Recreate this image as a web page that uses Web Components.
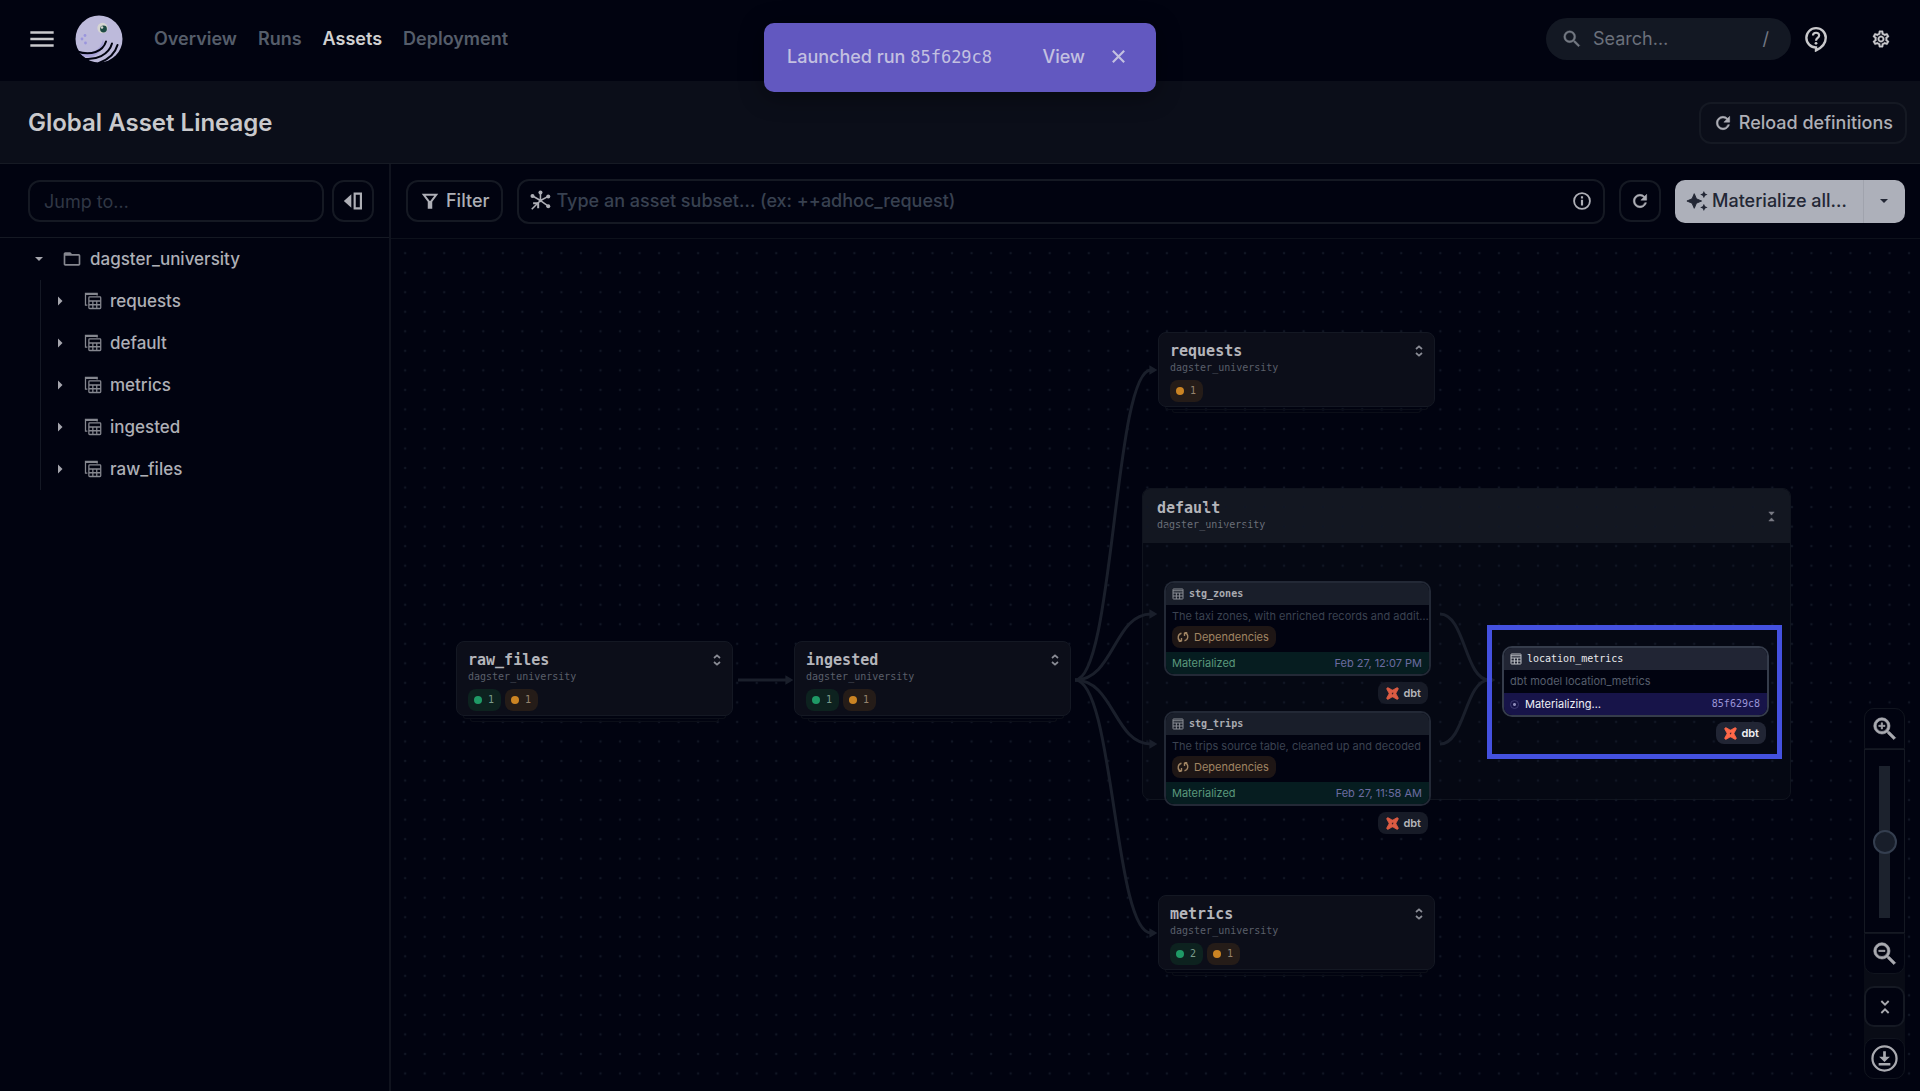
<!DOCTYPE html>
<html lang="en">
<head>
<meta charset="utf-8">
<meta name="viewport" content="width=device-width, initial-scale=1">
<title>Global Asset Lineage</title>
<style>
  :root {
    --bg: #010310;
    --panel: #0b0e19;
    --line: #151923;
    --text: #aeafb6;
    --bright: #c9c9cc;
    --mono: "DejaVu Sans Mono", "Liberation Mono", monospace;
  }
  html, body { height: 100%; }
  body {
    margin: 0;
    background: var(--bg);
    color: var(--text);
    font: 17px/20px Inter, "Liberation Sans", sans-serif;
    font-optical-sizing: none;
  }
</style>
</head>
<body>
<lineage-app></lineage-app>

<script>
const BASE = `
  *, *::before, *::after { box-sizing: border-box; }
  button, input { font: inherit; font-optical-sizing: inherit; color: inherit; margin: 0; }
  button { cursor: pointer; }
  a { color: inherit; text-decoration: none; }
`;

function define(name, css, html) {
  customElements.define(name, class extends HTMLElement {
    constructor() {
      super();
      const markup = typeof html === 'function' ? html(this) : html;
      this.attachShadow({ mode: 'open' }).innerHTML = `<style>${BASE}${css}</style>${markup}`;
    }
  });
}

const LENS = 'M15.5 14h-.79l-.28-.27A6.47 6.47 0 0 0 16 9.5 6.5 6.5 0 1 0 9.5 16c1.61 0 3.09-.59 4.23-1.57l.27.28v.79l5 4.99L20.49 19zm-6 0C7.01 14 5 11.99 5 9.5S7.01 5 9.5 5 14 7.01 14 9.5 11.99 14 9.5 14z';

const ICONS = {
  menu: '<path d="M2 6.4h20M2 12h20M2 17.6h20" fill="none" stroke="currentColor" stroke-width="2.2"/>',
  search: `<path d="${LENS}" stroke="currentColor" stroke-width=".4"/>`,
  zoomin: `<path d="${LENS}M12 10h-2v2H9v-2H7V9h2V7h1v2h2z" stroke="currentColor" stroke-width=".5"/>`,
  zoomout: `<path d="${LENS}M7 9h5v1H7z" stroke="currentColor" stroke-width=".5"/>`,
  refresh: '<path d="M17.65 6.35A7.958 7.958 0 0 0 12 4c-4.42 0-7.99 3.58-7.99 8s3.57 8 7.99 8c3.73 0 6.84-2.55 7.73-6h-2.08A5.99 5.99 0 0 1 12 18c-3.31 0-6-2.69-6-6s2.69-6 6-6c1.66 0 3.14.69 4.22 1.78L13 11h7V4z" stroke="currentColor" stroke-width=".6"/>',
  gear: '<path d="M19.43 12.98c.04-.32.07-.64.07-.98 0-.34-.03-.66-.07-.98l2.11-1.65c.19-.15.24-.42.12-.64l-2-3.46a.5.5 0 0 0-.61-.22l-2.49 1c-.52-.4-1.08-.73-1.69-.98l-.38-2.65A.488.488 0 0 0 14 2h-4c-.25 0-.46.18-.49.42l-.38 2.65c-.61.25-1.17.59-1.69.98l-2.49-1a.566.566 0 0 0-.18-.03c-.17 0-.34.09-.43.25l-2 3.46c-.13.22-.07.49.12.64l2.11 1.65c-.04.32-.07.65-.07.98 0 .33.03.66.07.98l-2.11 1.65c-.19.15-.24.42-.12.64l2 3.46a.5.5 0 0 0 .61.22l2.49-1c.52.4 1.08.73 1.69.98l.38 2.65c.03.24.24.42.49.42h4c.25 0 .46-.18.49-.42l.38-2.65c.61-.25 1.17-.59 1.69-.98l2.49 1c.06.02.12.03.18.03.17 0 .34-.09.43-.25l2-3.46c.12-.22.07-.49-.12-.64zm-1.98-1.71c.04.31.05.52.05.73 0 .21-.02.43-.05.73l-.14 1.13.89.7 1.08.84-.7 1.21-1.27-.51-1.04-.42-.9.68c-.43.32-.84.56-1.25.73l-1.06.43-.16 1.13-.2 1.35h-1.4l-.19-1.35-.16-1.13-1.06-.43c-.43-.18-.83-.41-1.23-.71l-.91-.7-1.06.43-1.27.51-.7-1.21 1.08-.84.89-.7-.14-1.13c-.03-.31-.05-.54-.05-.74s.02-.43.05-.73l.14-1.13-.89-.7-1.08-.84.7-1.21 1.27.51 1.04.42.9-.68c.43-.32.84-.56 1.25-.73l1.06-.43.16-1.13.2-1.35h1.39l.19 1.35.16 1.13 1.06.43c.43.18.83.41 1.23.71l.91.7 1.06-.43 1.27-.51.7 1.21-1.07.85-.89.7zM12 8c-2.21 0-4 1.79-4 4s1.79 4 4 4 4-1.79 4-4-1.79-4-4-4zm0 6c-1.1 0-2-.9-2-2s.9-2 2-2 2 .9 2 2-.9 2-2 2z" stroke="currentColor" stroke-width=".4"/>',
  help: '<path d="M12 2a8.9 8.9 0 1 0 0 17.8V22.500C16.800 20.300 21 16 21 10.900A8.900 8.900 0 0 0 12 2z" fill="none" stroke="currentColor" stroke-width="2.200"/><path d="M9.200 8.800c0-3.400 5.700-3.500 5.700 0 0 2.200-2.900 2.300-2.900 4.800" fill="none" stroke="currentColor" stroke-width="2"/><circle cx="12" cy="16" r="1.300"/>',
  info: '<circle cx="12" cy="12" r="9.500" fill="none" stroke="currentColor" stroke-width="2.200"/><path d="M10.700 10.500h2.600V17.500h-2.600zM10.700 6.300h2.600v2.600h-2.600z"/>',
  close: '<path d="M4 4l16 16M20 4L4 20" fill="none" stroke="currentColor" stroke-width="3"/>',
  down: '<path d="M4 8h16l-8 8z"/>',
  right: '<path d="M8 3l9 9-9 9z"/>',
  folder: '<path d="M20 6h-8l-2-2H4c-1.100 0-2 .9-2 2v12c0 1.100.9 2 2 2h16c1.100 0 2-.9 2-2V8c0-1.100-.9-2-2-2zm0 12H4V8h16z"/>',
  filter: '<path d="M4.500 4.500h15L13.500 12.500V20h-3v-7.500z" fill="none" stroke="currentColor" stroke-width="2.400"/><path d="M10 12h4v8h-4z"/>',
  panel: '<path d="M10 4v16L1 12z"/><path d="M14 3.200h7.500v17.600H14z" fill="none" stroke="currentColor" stroke-width="2.600"/>',
  graph: '<g fill="none" stroke="currentColor" stroke-width="1.700"><path d="M12.500 11.500V3.500M12.500 11.500L21 7M12.500 11.500L4 6.500M12.500 11.500l8.500 6M12.500 11.500L3 21"/><path d="M4.500 14.500h5.500v5.500" stroke-width="2.200"/></g><circle cx="12.500" cy="2.800" r="2.200"/><circle cx="21" cy="7" r="2.200"/><circle cx="3.800" cy="6.500" r="2.200"/><circle cx="21" cy="17.800" r="2.200"/><circle cx="12.500" cy="11.500" r="1.800"/>',
  sparkle: '<path d="M9 4l2.400 5.600L17 12l-5.600 2.400L9 20l-2.400-5.600L1 12l5.600-2.400z" stroke="currentColor"/><path d="M19.500 1l1.300 2.700 2.700 1.300-2.700 1.300-1.300 2.700-1.300-2.700L15.500 5l2.700-1.300zM19.500 15l1.300 2.700 2.700 1.300-2.700 1.300-1.300 2.700-1.300-2.700-2.700-1.300 2.700-1.300z"/>',
  table: '<g fill="none" stroke="currentColor" stroke-width="2"><rect x="2" y="2" width="20" height="20" rx="1"/><path d="M2 5.500h20M2 10h20M2 16h20M8.700 10v12M15.300 10v12"/></g>',
  tables: '<g fill="none" stroke="currentColor" stroke-width="1.700"><path d="M4.500 17.500H2V2h15.500v2.500"/><rect x="6.500" y="6.500" width="15.800" height="15.500" rx="1"/><path d="M6.500 12h15.800M6.500 17h15.800M11.800 12v10M17 12v10"/></g><path d="M2 2h16v2H2z"/>',
  expand: '<path d="M7.500 9l4.500-4 4.500 4M7.500 15l4.500 4 4.500-4" fill="none" stroke="currentColor" stroke-width="2.600"/>',
  collapse: '<path d="M6.500 3l5.500 5.500L17.500 3M6.500 21l5.500-5.500 5.500 5.500" fill="none" stroke="currentColor" stroke-width="2.800"/>',
  squeeze: '<path d="M6 2l6 7 6-7zM6 22l6-7 6 7z" stroke="currentColor"/>',
  download: '<circle cx="12" cy="12" r="10.700" fill="none" stroke="currentColor" stroke-width="2"/><path d="M10.800 5.500h2.400v5h3.600L12 15 7.200 10.500h3.600zM6.800 16h10.400v2.200H6.800z"/>',
  deps: '<g fill="none" stroke="currentColor" stroke-width="2.800"><path d="M9 20.500V14M9 20.500C4.500 20 2 16 2.500 11.500 3 8 5 5.500 9 4.500M3.500 20.500H9M15 3.500V10M15 3.500c4.500.500 7 4.500 6.500 9-.5 3.500-2.500 6-6.500 7M20.500 3.500H15"/></g>',
  dbt: '<path d="M1.600 4.200C.8 2.300 2.400.8 4.200 1.600L11 5.400c.7.300 1.400.3 2 0l6.800-3.800c1.900-.9 3.500.8 2.600 2.600L18.600 11c-.3.700-.3 1.400 0 2l3.800 6.800c.9 1.900-.8 3.500-2.600 2.600L13 18.600c-.7-.3-1.400-.3-2 0l-6.800 3.800c-1.900.9-3.500-.8-2.600-2.600L5.400 13c.3-.7.3-1.400 0-2z" fill="#ff6849" stroke="#ff6849" stroke-width="1.500"/><path d="M11.500 10.500l2-.5v2l-1.500 2-1.500-1z" fill="#41202a"/>'
};

define('ui-icon',
  `:host { display: inline-flex; flex: none; width: var(--size, 18px); height: var(--size, 18px); }
   svg { width: 100%; height: 100%; fill: currentColor; display: block; }`,
  el => `<svg viewBox="0 0 24 24" aria-hidden="true">${ICONS[el.getAttribute('name')]}</svg>`);

define('brand-logo',
  `:host { display: block; width: 48px; height: 48px; } svg { display: block; }`,
  `<svg width="48" height="48" viewBox="0 0 48 48" aria-hidden="true">
     <circle cx="24" cy="24" r="23.500" fill="#bdbadb"/>
     <path d="M3 36c12 4 23 0 25-12 2 6-2 14-9 17S6 41 3 36z" fill="#9f98d8" opacity=".7"/>
     <g fill="none" stroke="#010310" stroke-width="2" stroke-linecap="round">
       <path d="M2 36.500c14 4.500 26 0 29-10"/>
       <path d="M7 43.500c14 2.500 27-4 30-15"/>
       <path d="M24 48c9-3.500 16-9 18.500-18"/>
     </g>
     <circle cx="27.500" cy="13" r="5.200" fill="#d6d6d2"/>
     <circle cx="28.500" cy="14" r="3.400" fill="#1d4a44"/><circle cx="27" cy="12.500" r="1.300" fill="#d6d6d2"/>
     <g fill="#9a95dd"><circle cx="10" cy="20.500" r="1.400"/><circle cx="7" cy="24" r="1.400"/><circle cx="10.500" cy="28" r="1.400"/></g>
   </svg>`);

define('top-bar',
  `:host { display: flex; align-items: center; height: 81px; padding: 0 21px 3px 28px; font-size: 18px; }
   .menu, .tool { background: none; border: 0; padding: 0; display: flex; color: var(--bright); }
   .menu { --size: 28px; }
   brand-logo { margin: 0 31px 0 19px; }
   nav { display: flex; gap: 21px; font-weight: 600; color: #555d6a; flex: 1; }
   nav a[aria-current] { color: #d0d0d0; }
   .search { display: flex; align-items: center; gap: 10px; width: 245px; height: 42px; padding: 0 22px 0 15px; border-radius: 21px; background: #131823; color: #747983; --size: 22px; }
   input { flex: 1; min-width: 0; padding: 0; border: 0; background: none; outline: 0; }
   input::placeholder { color: #6b707b; opacity: 1; }
   .help { --size: 26px; margin: 0 42px 0 12px; }
   .gear { --size: 20px; margin-right: 8px; }`,
  `<button class="menu" aria-label="Menu"><ui-icon name="menu"></ui-icon></button>
   <brand-logo></brand-logo>
   <nav><a href="#">Overview</a><a href="#">Runs</a><a href="#" aria-current="page">Assets</a><a href="#">Deployment</a></nav>
   <label class="search"><ui-icon name="search"></ui-icon><input type="text" aria-label="Search" placeholder="Search…"><span>/</span></label>
   <button class="tool help" aria-label="Help"><ui-icon name="help"></ui-icon></button>
   <button class="tool gear" aria-label="Settings"><ui-icon name="gear"></ui-icon></button>`);

define('ui-button',
  `:host { display: block; flex: none; }
   button { display: flex; align-items: center; justify-content: center; gap: 6px; height: 42px; min-width: 42px; padding: 0 var(--pad, 0px); background: none; border: 2px solid var(--line); border-radius: 12px; color: var(--text); font-weight: 500; white-space: nowrap; }`,
  el => `<button aria-label="${el.getAttribute('label') || el.textContent.trim()}"><slot></slot></button>`);

define('title-bar',
  `:host { display: flex; align-items: center; justify-content: space-between; height: 83px; padding: 2px 13px 0 28px; background: var(--panel); border-bottom: 1px solid #161a24; font-size: 18px; }
   h1 { margin: 0; font-size: 24px; line-height: 28px; font-weight: 600; color: var(--bright); }
   ui-button { --pad: 12px; --size: 20px; }`,
  `<h1><slot></slot></h1>
   <ui-button><ui-icon name="refresh"></ui-icon>Reload definitions</ui-button>`);

define('run-toast',
  `:host { position: absolute; top: 23px; left: 50%; transform: translateX(-50%); display: flex; align-items: center; width: 392px; height: 69px; padding: 0 29px 2px 23px; background: #6258c0; border-radius: 10px; color: #c3c0e0; box-shadow: 0 4px 24px #0006; font-size: 18px; font-weight: 500; }
   p { margin: 0; flex: 1; }
   code { font: 17px/20px var(--mono); }
   button { background: none; border: 0; padding: 0; display: flex; color: inherit; --size: 17px; margin-left: 25px; }`,
  `<p>Launched run <code><slot></slot></code></p><a href="#">View</a>
   <button aria-label="Dismiss"><ui-icon name="close"></ui-icon></button>`);

define('tree-row',
  `:host { display: flex; align-items: center; height: 42px; color: var(--text); font-weight: 500; }
   .caret { --size: 12px; display: flex; width: 14px; background: none; border: 0; padding: 0; color: #a5a6ad; }
   .kind { --size: 20px; color: #85878f; margin: 0 8px 0 15px; }
   :host([group]) .kind { --size: 18px; margin: 0 8px 0 16px; }`,
  el => `<button class="caret" aria-label="Toggle"><ui-icon name="${el.hasAttribute('group') ? 'right' : 'down'}"></ui-icon></button>
   <ui-icon class="kind" name="${el.hasAttribute('group') ? 'tables' : 'folder'}"></ui-icon><a href="#"><slot></slot></a>`);

define('asset-sidebar',
  `:host { display: block; flex: 0 0 391px; min-width: 0; border-right: 2px solid #10131e; }
   .bar { display: flex; gap: 8px; padding: 16px 15px 15px 28px; border-bottom: 1px solid var(--line); --size: 20px; font-size: 18px; }
   input { flex: 1; min-width: 0; height: 42px; padding: 0 14px; background: none; border: 2px solid var(--line); border-radius: 12px; }
   input::placeholder { color: #303745; opacity: 1; }
   .tree { padding-left: 33px; }
   .kids { margin-left: 7px; padding-left: 13px; border-left: 1px solid #141824; }`,
  `<div class="bar"><input type="text" aria-label="Jump to" placeholder="Jump to…"><ui-button label="Hide sidebar"><ui-icon name="panel"></ui-icon></ui-button></div>
   <div class="tree"><tree-row>dagster_university</tree-row>
     <div class="kids"><tree-row group>requests</tree-row><tree-row group>default</tree-row><tree-row group>metrics</tree-row><tree-row group>ingested</tree-row><tree-row group>raw_files</tree-row></div>
   </div>`);

define('lineage-toolbar',
  `:host { display: flex; align-items: center; gap: 14px; height: 75px; padding: 0 15px; border-bottom: 1px solid #0d111b; --size: 20px; font-size: 18px; }
   .filter { --pad: 12px; }
   .query { flex: 1; display: flex; align-items: center; gap: 5px; height: 45px; padding: 0 11px 0 10px; border: 2px solid var(--line); border-radius: 12px; --size: 22px; }
   .query ui-icon:last-child { --size: 20px; }
   input { flex: 1; min-width: 0; padding: 0; border: 0; background: none; outline: 0; font-weight: 500; }
   input::placeholder { color: #384150; opacity: 1; }
   .split { display: flex; height: 43px; border-radius: 10px; overflow: hidden; background: #adb0ba; color: #232735; }
   .split button { display: flex; align-items: center; gap: 4px; border: 0; background: none; padding: 0 16px 0 11px; --size: 22px; font-weight: 500; }
   .split button + button { border-left: 1px solid #a0a3ad; padding: 0 15px 0 14px; --size: 12px; }`,
  `<ui-button class="filter"><ui-icon name="filter"></ui-icon>Filter</ui-button>
   <label class="query"><ui-icon name="graph"></ui-icon><input type="text" aria-label="Asset subset" placeholder="Type an asset subset… (ex: ++adhoc_request)"><ui-icon name="info"></ui-icon></label>
   <ui-button label="Refresh"><ui-icon name="refresh"></ui-icon></ui-button>
   <div class="split"><button><ui-icon name="sparkle"></ui-icon>Materialize all…</button><button aria-label="More"><ui-icon name="down"></ui-icon></button></div>`);

define('status-count',
  `:host { display: inline-flex; align-items: center; gap: 6px; height: 22px; padding: 0 7px 0 6px; border-radius: 8px; background: #0d221f; color: #7a9c8b; font: 10px/14px var(--mono); --dot: #1f9a66; }
   :host([tone=warn]) { background: #251c18; color: #95836d; --dot: #cb8423; }
   i { width: 8px; height: 8px; border-radius: 4px; background: var(--dot); }`,
  `<i></i><span><slot></slot></span>`);

define('group-node',
  `:host { display: block; position: absolute; width: 277px; }
   .card { position: relative; height: 75px; padding: 10px 11px; background: #0c0e19; border: 1px solid #141823; border-radius: 8px; font-family: var(--mono); }
   .stack { height: 3px; margin: 0 7px; border: 1px solid #0b0e18; border-top: 0; border-radius: 0 0 4px 4px; }
   .stack + .stack { margin: 0 14px; }
   b { display: block; font-size: 15px; line-height: 17px; font-weight: 700; color: #b4b5bb; }
   small { display: block; font-size: 10px; line-height: 16px; color: #5a5f6a; }
   .counts { display: flex; gap: 4px; margin-top: 4px; }
   ui-icon { position: absolute; right: 7px; top: 10px; --size: 16px; color: #8a8c95; }`,
  el => `<div class="card"><b>${el.getAttribute('name')}</b><small>dagster_university</small><div class="counts"><slot></slot></div><ui-icon name="expand"></ui-icon></div><div class="stack"></div><div class="stack"></div>`);

define('group-frame',
  `:host { display: block; position: absolute; border: 1px solid #10141e; border-radius: 8px; background: #080b1599; overflow: hidden; }
   header { display: flex; justify-content: space-between; align-items: center; height: 54px; padding: 1px 13px 0 14px; background: #131721; font-family: var(--mono); }
   b { display: block; font-size: 15px; line-height: 17px; font-weight: 700; color: #b4b5bb; }
   small { display: block; font-size: 10px; line-height: 16px; color: #6b6f79; }
   ui-icon { --size: 11px; color: #7a7c85; }`,
  `<header><div><b><slot></slot></b><small>dagster_university</small></div><ui-icon name="squeeze"></ui-icon></header>`);

define('asset-node',
  `:host { display: block; position: absolute; width: 267px; font-size: 11px; line-height: 14px; --edge: #232936; --head: #191e2a; --title: #a9abb1; --desc: #3b4250; }
   .card { border: 2px solid var(--edge); border-radius: 10px; background: #010310; overflow: hidden; }
   header { display: flex; align-items: center; gap: 5px; height: 22px; padding: 0 6px; background: var(--head); color: var(--title); font: 700 10px/14px var(--mono); --size: 12px; }
   header ui-icon { opacity: .8; }
   p { margin: 0; padding: 4px 0 5px 6px; height: 23px; color: var(--desc); white-space: nowrap; }
   .dep { display: flex; width: max-content; align-items: center; gap: 5px; height: 22px; margin: -2px 0 4px 6px; padding: 0 7px 0 5px; border-radius: 8px; background: #1e1615; color: #a08463; --size: 12px; }
   footer { display: flex; align-items: center; justify-content: space-between; height: 22px; padding: 0 7px 0 6px; background: #061d20; color: #5a987c; }
   footer span:last-child { color: #6b6ca0; }
   .dbt { display: flex; width: max-content; align-items: center; gap: 4px; height: 22px; margin: 6px 3px 0 auto; padding: 0 7px 0 8px; border-radius: 8px; background: #171b27; color: #b4b5ba; font-weight: 600; --size: 13px; }
   .dbt ui-icon { opacity: .85; }
   :host([running]) { --edge: #353c4b; --head: #212534; --title: #e8e9ec; --desc: #565e6c; }
   :host([running]) header { font-weight: 400; }
   :host([running]) footer { background: #171449; color: #f0f0f6; }
   :host([running]) footer span:last-child { font: 10px/14px var(--mono); color: #9a94d8; }
   :host([running]) .dbt { margin-top: 5px; background: #212534; color: #f0f0f4; }
   :host([running]) .dbt ui-icon { opacity: 1; }
   .run { display: flex; align-items: center; gap: 6px; }
   .run i { width: 9px; height: 9px; border: 1px solid #3c3a70; border-radius: 5px; background: radial-gradient(#8d8bb8 1px, transparent 2px); }`,
  el => {
    const running = el.hasAttribute('running');
    return `<div class="card"><header><ui-icon name="table"></ui-icon>${el.getAttribute('name')}</header><p><slot></slot></p>
      ${running ? '' : '<div class="dep"><ui-icon name="deps"></ui-icon>Dependencies</div>'}
      <footer><span class="run">${running ? '<i></i>Materializing…' : 'Materialized'}</span><span>${el.getAttribute('stamp')}</span></footer></div>
      <div class="dbt"><ui-icon name="dbt"></ui-icon>dbt</div>`;
  });

define('dot-grid',
  `:host { display: block; position: absolute; inset: 0; } svg { display: block; width: 100%; height: 100%; }`,
  `<svg aria-hidden="true"><defs><pattern id="p" width="16" height="16" patternUnits="userSpaceOnUse" patternTransform="translate(4.400 4.400) scale(1.2207)"><circle cx="8" cy="8" r="1" fill="#111624"/></pattern></defs><rect width="100%" height="100%" fill="url(#p)"/></svg>`);

define('lineage-edges',
  `:host { display: block; position: absolute; inset: 0; } svg { display: block; width: 100%; height: 100%; }`,
  `<svg aria-hidden="true"><defs><marker id="a" viewBox="0 0 10 12" refX="2" refY="6" markerWidth="8" markerHeight="10" markerUnits="userSpaceOnUse" orient="auto"><path d="M0 0L10 6 0 12z" fill="#1a1f2b"/></marker></defs>
   <g fill="none" stroke="#1a1f2b" stroke-width="3">
     <path d="M347 441H396" marker-end="url(#a)"/>
     <path d="M684 441C723 441 723 131 760 131" marker-end="url(#a)"/>
     <path d="M684 441C723 441 723 375 760 375" marker-end="url(#a)"/>
     <path d="M684 441C723 441 723 505 760 505" marker-end="url(#a)"/>
     <path d="M684 441C723 441 723 694 760 694" marker-end="url(#a)"/>
     <path d="M1049 375C1074 375 1074 441 1098 441"/>
     <path d="M1049 505C1074 505 1074 441 1098 441" marker-end="url(#a)"/>
   </g></svg>`);

define('zoom-controls',
  `:host { display: flex; flex-direction: column; position: absolute; right: 15px; bottom: 12px; width: 41px; background: #090c16; border-radius: 10px; }
   button { display: flex; align-items: center; justify-content: center; height: 41px; padding: 0; background: var(--bg); border: 1px solid #10141e; border-radius: 10px; color: #a9aab0; --size: 30px; }
   .in { border-radius: 10px 10px 0 0; } .out { border-radius: 0 0 10px 10px; }
   .rail { display: flex; justify-content: center; height: 184px; padding: 16px 0; background: var(--bg); border: 1px solid var(--line); }
   input { appearance: none; writing-mode: vertical-lr; direction: rtl; width: 24px; height: 152px; background: linear-gradient(#1c222d, #1c222d) center / 11px 100% no-repeat; outline: 0; }
   input::-webkit-slider-thumb { appearance: none; width: 24px; height: 24px; border-radius: 12px; background: #181e2a; border: 2px solid #343e4f; }
   .fold { margin: 12px 0 11px; border: 2px solid var(--line); --size: 16px; }
   .save { --size: 27px; }`,
  `<button class="in" aria-label="Zoom in"><ui-icon name="zoomin"></ui-icon></button>
   <div class="rail"><input type="range" aria-label="Zoom" min="0" max="100" value="50"></div>
   <button class="out" aria-label="Zoom out"><ui-icon name="zoomout"></ui-icon></button>
   <button class="fold" aria-label="Collapse all"><ui-icon name="collapse"></ui-icon></button>
   <button class="save" aria-label="Download"><ui-icon name="download"></ui-icon></button>`);

define('lineage-canvas',
  `:host { display: block; position: relative; flex: 1; overflow: hidden; }
   .focus { position: absolute; left: 1096px; top: 386px; width: 295px; height: 134px; border: 5px solid #4451e0; }
   #raw { left: 65px; top: 402px; } #ing { left: 403px; top: 402px; }
   #req { left: 767px; top: 93px; } #met { left: 767px; top: 656px; }
   #def { left: 751px; top: 249px; width: 649px; height: 312px; }
   #zones { left: 773px; top: 342px; } #trips { left: 773px; top: 472px; } #loc { left: 1111px; top: 407px; }`,
  `<group-frame id="def">default</group-frame>
   <dot-grid></dot-grid>
   <lineage-edges></lineage-edges>
   <group-node id="raw" name="raw_files"><status-count>1</status-count><status-count tone="warn">1</status-count></group-node>
   <group-node id="ing" name="ingested"><status-count>1</status-count><status-count tone="warn">1</status-count></group-node>
   <group-node id="req" name="requests"><status-count tone="warn">1</status-count></group-node>
   <group-node id="met" name="metrics"><status-count>2</status-count><status-count tone="warn">1</status-count></group-node>
   <asset-node id="zones" name="stg_zones" stamp="Feb 27, 12:07 PM">The taxi zones, with enriched records and addit…</asset-node>
   <asset-node id="trips" name="stg_trips" stamp="Feb 27, 11:58 AM">The trips source table, cleaned up and decoded</asset-node>
   <div class="focus"></div>
   <asset-node id="loc" running name="location_metrics" stamp="85f629c8">dbt model location_metrics</asset-node>
   <zoom-controls></zoom-controls>`);

define('lineage-app',
  `:host { display: flex; flex-direction: column; min-height: 100vh; position: relative; }
   .body { display: flex; flex: 1; }
   main { display: flex; flex-direction: column; flex: 1; min-width: 0; }`,
  `<top-bar></top-bar><title-bar>Global Asset Lineage</title-bar>
   <div class="body"><asset-sidebar></asset-sidebar><main><lineage-toolbar></lineage-toolbar><lineage-canvas></lineage-canvas></main></div>
   <run-toast>85f629c8</run-toast>`);
</script>
</body>
</html>
